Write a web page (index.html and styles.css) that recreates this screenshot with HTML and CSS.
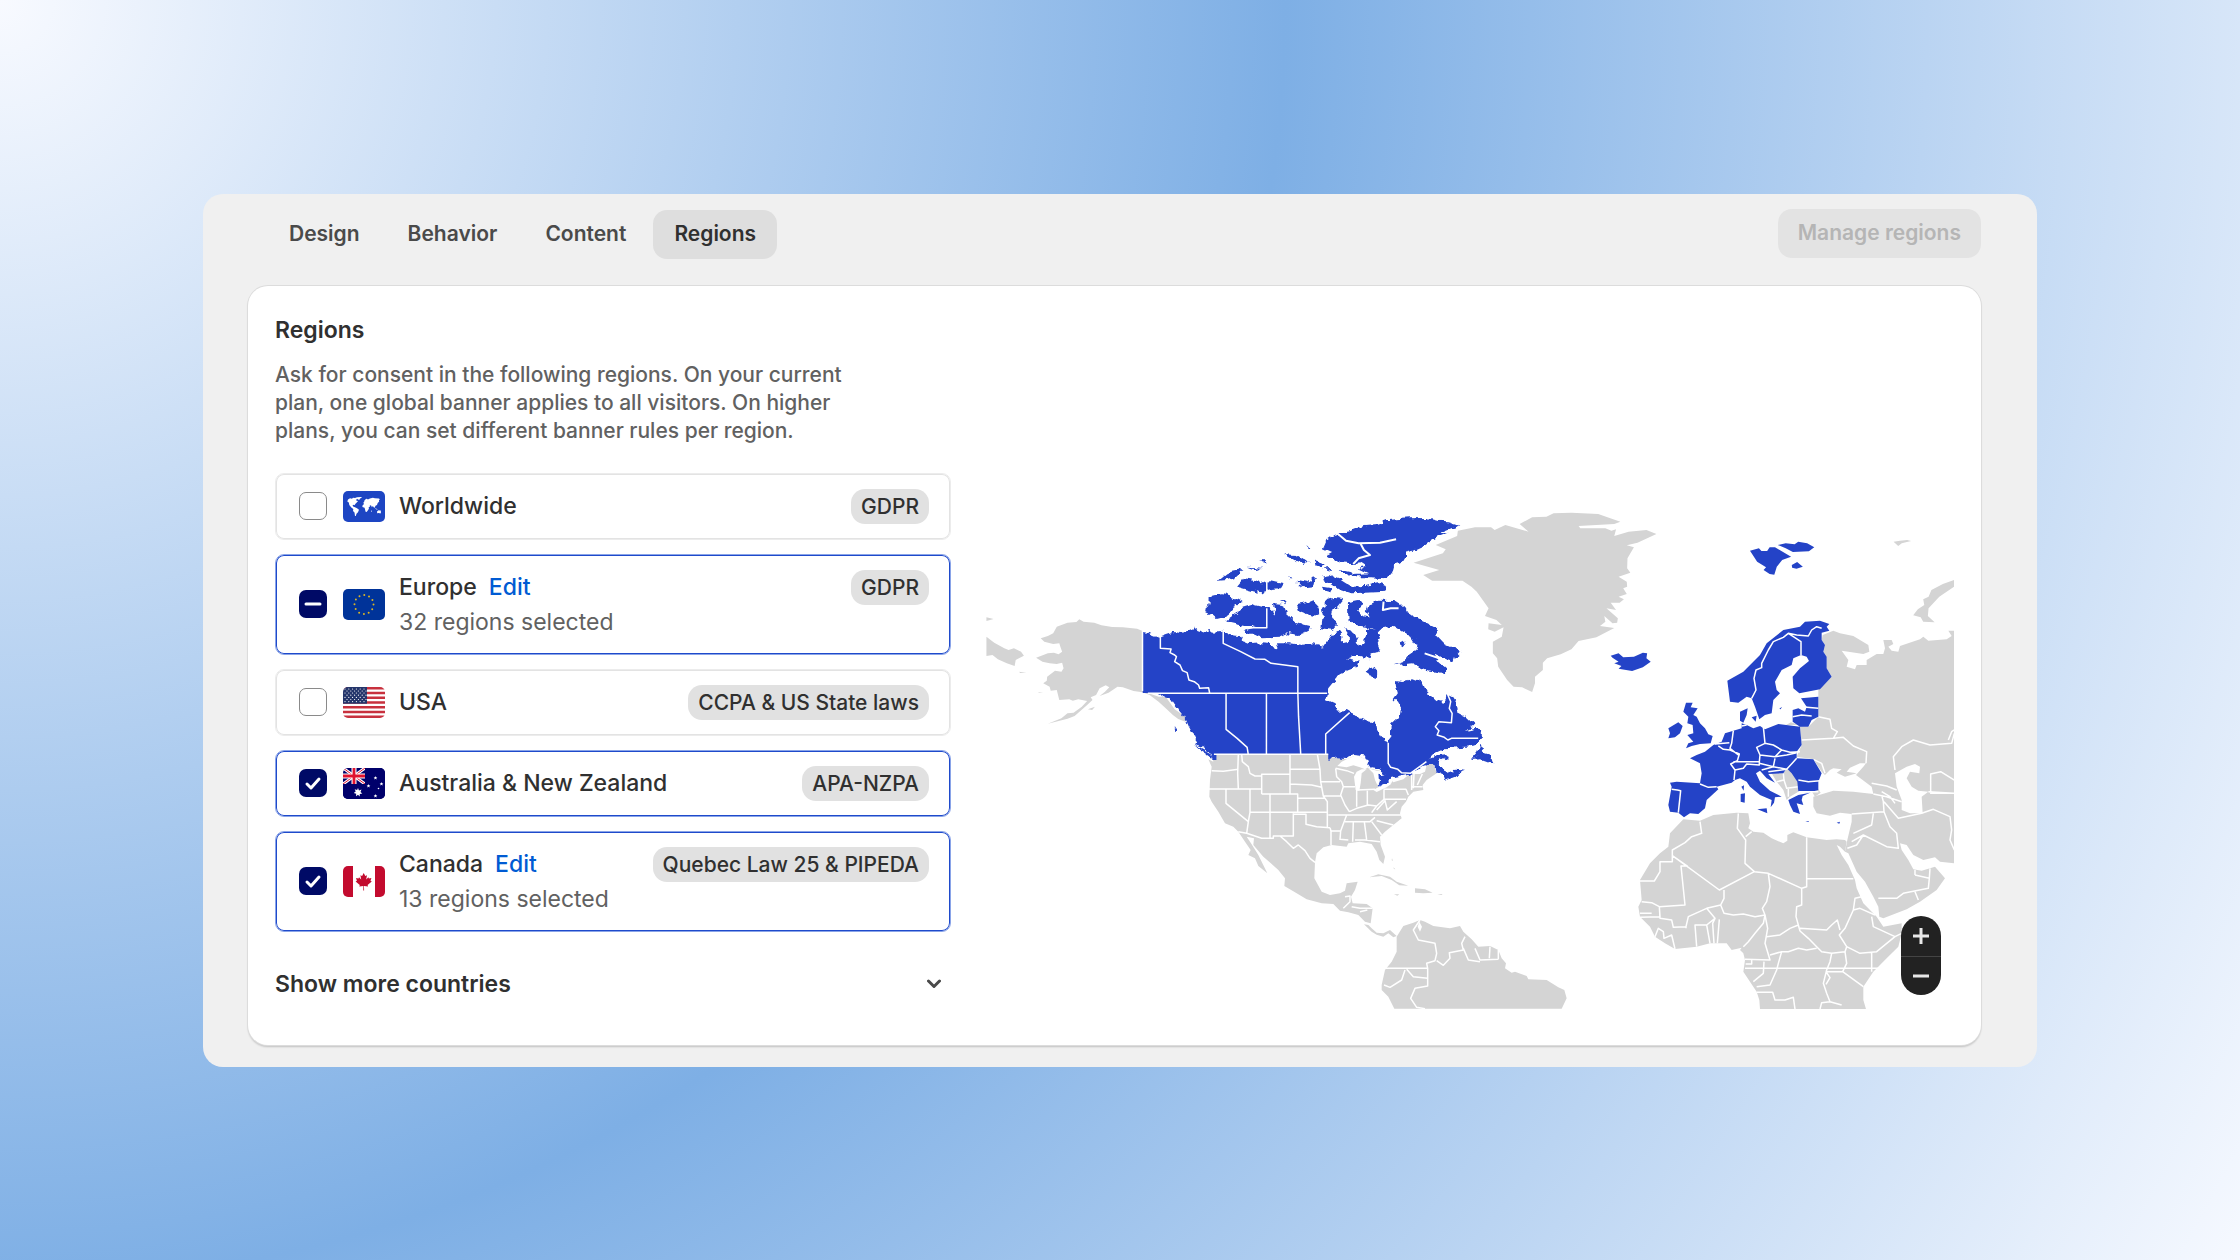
FILE: index.html
```html
<!DOCTYPE html>
<html lang="en">
<head>
    <meta charset="UTF-8">
    <title>Regions</title>
    <link rel="stylesheet" href="styles.css">
</head>
<body>
    <main class="panel">
        <header class="panel-header">
            <nav class="tabs">
                <button class="tab" type="button">Design</button>
                <button class="tab" type="button">Behavior</button>
                <button class="tab" type="button">Content</button>
                <button class="tab active" type="button">Regions</button>
            </nav>
            <button class="manage-btn" type="button" disabled>Manage regions</button>
        </header>

        <section class="card">
            <div class="settings">
                <h1>Regions</h1>
                <p class="description">Ask for consent in the following regions. On your current plan, one global banner applies to all visitors. On higher plans, you can set different banner rules per region.</p>

                <div class="region-list">
                    <div class="region">
                        <span class="checkbox">
                            <input type="checkbox" id="worldwide">
                        </span>
                        <svg class="flag" viewBox="0 0 42 31">
                            <rect width="42" height="31" fill="#1d45c3"/>
                            <path fill="#fff" d="M5 8.500l2-1.200 2 .4 1-1 2 .2 2-.7 4-.2 1 .8-2 .7-.5 1.300-1 0-1.500-1-1 1.500 2 1-1.500 1.500-1 1-1 1.500-1-.5-1 .8 1 1.200 1.500.5 2 1 2 1.500-1 2.500-1.500 1.500-.7 2.200-.8 0-.5-3.500-1.500-1.500.3-2-2-1.500-2-2.500-.5-2.500-1.500-1zM19.500 14.500l1.500-1.500-.7-1.200.9-1 .2-1.300 1.500-1.500 1-.2 1 .7 2-.9 3-.8 2 .5 4 .2 1 .8-1 1 .3 1.200-1.500 1.500-.7 2-1.500.8-.7 1.700-.7.3-1.300-1.900-.9 1.400-.8-1.900-1.300-.1.200 1.200-1.300.8.2 1.500-1.300 2-1 1.200-1-.2-1-4-2.200-.8zM34 20.500l1.500-1.200 1.200.3.500-.6.9 2-.6 1.400-1.700-.5-1.600.3zM32 16.700l1.500 1 1.500 1-2-.5zM28 20l.5-1 .2 1.500-.7.8z"/>
                        </svg>
                        <div class="region-info">
                            <div class="region-title"><label for="worldwide">Worldwide</label></div>
                        </div>
                        <span class="badge">GDPR</span>
                    </div>

                    <div class="region selected">
                        <span class="checkbox">
                            <input type="checkbox" id="europe" checked>
                            <svg viewBox="0 0 28 28"><path d="M7 14h14"/></svg>
                        </span>
                        <svg class="flag" viewBox="0 0 42 31">
                            <rect width="42" height="31" fill="#003399"/>
                            <circle cx="21" cy="15.500" r="9.500" fill="none" stroke="#d9b526" stroke-width="2" stroke-linecap="round" stroke-dasharray="0 4.974"/>
                        </svg>
                        <div class="region-info">
                            <div class="region-title"><label for="europe">Europe</label><a href="#">Edit</a></div>
                            <div class="region-count">32 regions selected</div>
                        </div>
                        <span class="badge">GDPR</span>
                    </div>

                    <div class="region">
                        <span class="checkbox">
                            <input type="checkbox" id="usa">
                        </span>
                        <svg class="flag" viewBox="0 0 42 31">
                            <rect width="42" height="31" fill="#fff"/>
                            <path stroke="#c8313e" stroke-width="2.400" d="M0 1.200h42M0 6h42M0 10.800h42M0 15.500h42M0 20.300h42M0 25h42M0 29.800h42"/>
                            <rect width="24" height="16.700" fill="#24356b"/>
                            <path stroke="#fff" stroke-width="1.200" stroke-linecap="round" stroke-dasharray="0 3.800" d="M2 2h21M4 4h19M2 6h21M4 8.200h19M2 10.400h21M4 12.500h19M2 14.600h21"/>
                        </svg>
                        <div class="region-info">
                            <div class="region-title"><label for="usa">USA</label></div>
                        </div>
                        <span class="badge">CCPA &amp; US State laws</span>
                    </div>

                    <div class="region selected">
                        <span class="checkbox">
                            <input type="checkbox" id="australia" checked>
                            <svg viewBox="0 0 28 28"><path d="M8 15l4 4 8-9"/></svg>
                        </span>
                        <svg class="flag" viewBox="0 0 42 31">
                            <rect width="42" height="31" fill="#00006b"/>
                            <path stroke="#fff" stroke-width="3" d="M0 0l22 16M22 0L0 16"/>
                            <path stroke="#e0122f" stroke-width="1" d="M0 0l22 16M22 0L0 16"/>
                            <path stroke="#fff" stroke-width="5" d="M11 0v16M0 8h22"/>
                            <path stroke="#e0122f" stroke-width="2.800" d="M11 0v16M0 8h22"/>
                            <path fill="#00006b" d="M22 0h20v31H0V16h22z"/>
                            <path fill="#fff" d="M15 20l1 2.500 2.500-1-1 2.500 1.800 1.500-2.500.5-.1 2.500-1.700-1.800-2 1.500.2-2.500-2.500-.7 2-1.500-1-2.300 2.400.8z"/>
                            <path fill="#fff" d="M32.500 8l.5 1.300 1.400 0-1.100.8.5 1.400-1.300-.8-1.300.8.4-1.400-1-.8 1.400 0zM25.500 16l.5 1.300 1.400 0-1.100.8.5 1.400-1.300-.8-1.300.8.4-1.400-1-.8 1.400 0zM38.500 14l.5 1.300 1.400 0-1.100.8.5 1.400-1.300-.8-1.300.8.4-1.400-1-.8 1.400 0zM32.500 26l.5 1.300 1.400 0-1.100.8.5 1.400-1.300-.8-1.300.8.4-1.400-1-.8 1.400 0z"/>
                            <circle cx="35.500" cy="20.500" r=".8" fill="#fff"/>
                        </svg>
                        <div class="region-info">
                            <div class="region-title"><label for="australia">Australia &amp; New Zealand</label></div>
                        </div>
                        <span class="badge">APA-NZPA</span>
                    </div>

                    <div class="region selected">
                        <span class="checkbox">
                            <input type="checkbox" id="canada" checked>
                            <svg viewBox="0 0 28 28"><path d="M8 15l4 4 8-9"/></svg>
                        </span>
                        <svg class="flag" viewBox="0 0 42 31">
                            <rect width="42" height="31" fill="#fff"/>
                            <path fill="#c30b2e" d="M0 0h10v31H0zM32 0h10v31H32z"/>
                            <path fill="#c30b2e" d="M20.700 7l1.600 3 1.700-.8-.8 4.300 2.200-2.300.5 1.300 2.500-.4-.9 2.600 1.300.7-4.200 3.500.5 1.600-4.100-.6.100 4.600h-.8l.1-4.600-4.100.6.500-1.600-4.200-3.500 1.300-.7-.9-2.600 2.500.4.500-1.300 2.200 2.300-.8-4.300 1.700.8z"/>
                        </svg>
                        <div class="region-info">
                            <div class="region-title"><label for="canada">Canada</label><a href="#">Edit</a></div>
                            <div class="region-count">13 regions selected</div>
                        </div>
                        <span class="badge">Quebec Law 25 &amp; PIPEDA</span>
                    </div>
                </div>

                <button class="show-more" type="button">
                    Show more countries
                    <svg viewBox="0 0 14 10"><path d="M1.500 2L7 7.500 12.500 2"/></svg>
                </button>
            </div>

            <div class="map">
                <svg class="map-canvas" viewBox="0 0 968 498">
                    <defs>
                        <!-- roughens the Canadian coastline -->
                        <filter id="coast" x="-2%" y="-2%" width="104%" height="104%" color-interpolation-filters="sRGB">
                            <feTurbulence type="fractalNoise" baseFrequency="0.05" numOctaves="2" seed="4" result="noise"/>
                            <feDisplacementMap in="SourceGraphic" in2="noise" scale="22" xChannelSelector="R" yChannelSelector="G"/>
                        </filter>
                        <!-- keeps the straight borders with Alaska and the lower states -->
                        <clipPath id="canada-border">
                            <path d="M455 0H1568V900H975V762H662V790H500V579H455z"/>
                        </clipPath>
                    </defs>

                    <!-- Alaska -->
                    <g transform="translate(-6 -11) scale(.35714 .33333)">
                        <path class="land" d="M455 393L440 386 400 382 370 381 340 376 320 368 290 365 278 358 270 366 245 368 215 380 205 400 190 408 170 415 180 425 205 432 222 430 225 440 230 455 220 463 207 458 190 460 170 468 157 473 175 485 195 490 215 492 230 488 234 505 228 515 210 512 188 530 187 542 177 550 195 560 198 572 215 570 222 600 250 598 260 602 275 598 300 603 285 620 262 638 245 640 228 655 190 671 245 656 265 648 300 615 315 600 310 592 325 585 335 565 352 556 362 562 350 575 335 588 360 578 385 560 400 562 430 573 455 577 475 585 500 605 520 625 540 645 555 657 575 665 575 650 545 628 520 590 500 590 455 573zM18 410L40 428 68 445 80 450 95 445 115 455 123 467 100 480 97 498 75 490 50 478 35 465 18 468zM18 352L38 357 18 363zM302 628l20-8-8 10zM110 515l20 4-18 0zM163 577l14 2-12 0z"/>
                    </g>

                    <!-- United States, Mexico, Central and South America -->
                    <g transform="translate(144 219) scale(.33333)">
                        <path class="land" d="M235 88L250 95 245 72 600 72 605 82 650 88 680 75 710 90 715 115 765 125 770 145 745 160 745 172 780 165 790 150 845 132 870 132 885 125 890 105 910 97 920 130 890 150 878 165 880 180 850 185 835 200 828 215 815 230 810 250 815 265 790 285 765 305 750 320 752 345 765 380 760 402 748 390 740 365 725 342 690 335 655 340 650 350 605 345 580 352 560 370 555 397 553 445 575 485 600 495 630 490 645 482 650 460 683 455 675 480 663 500 668 520 710 522 728 535 722 580 705 575 685 555 655 547 630 542 610 522 575 520 530 508 500 490 463 468 465 445 445 420 400 380 370 345 372 325 350 320 362 338 385 375 412 430 385 408 375 385 355 375 362 360 345 335 325 305 310 290 285 280 265 245 245 215 238 200 240 150 245 110z"/>
                        <path class="land" d="M702 583L715 585 725 595 740 608 760 610 780 600 800 618 790 622 775 610 760 620 740 614 725 605zM718 442L745 433 780 440 800 455 835 467 808 466 785 450 755 438zM855 475L885 478 908 488 880 490 855 488zM792 493l16 0-6 4zM922 492l16 0-4 3zM786 385l3 8-4-2zM790 412l6 6-4-1z"/>
                        <path class="land" d="M800 620L820 588 850 578 870 570 885 575 910 588 960 595 990 588 1000 605 1025 628 1045 650 1080 648 1105 660 1115 685 1128 700 1125 715 1145 728 1155 725 1190 738 1195 748 1250 750 1285 772 1303 780 1310 805 1295 836 793 836 775 800 755 780 755 765 765 720 785 695 800 665z"/>
                        <path class="water" d="M622 108L635 95 650 88 680 75 710 90 715 112 705 118 690 112 670 106 650 112zM680 125L695 118 710 118 695 130 692 160 688 182 677 180 672 140zM715 115L740 122 765 125 770 140 755 150 742 165 735 150 730 130zM730 180L745 172 785 160 770 172 740 186zM785 150L800 145 835 135 820 148 790 157zM868 575L876 590 870 605 863 590z"/>
                        <path class="border" d="M245 122L280 124 325 118M325 72L323 130 325 177M235 177H395M335 72L337 95 355 110 360 130 375 138 395 137M395 192V133H480M480 72V192M395 192H503V247M420 192V325M360 177V247H592M288 177V220L355 275 350 310M360 247L355 275M325 305L350 310 395 325H430V318H490V250M430 318H450L470 335 490 355 505 345 525 362 540 385 555 397M490 253H528V283L560 290 600 293M480 118H568M480 162L545 165 575 172M503 205H585M562 72L570 118 572 155H630M617 115L620 140 635 155 640 170H675M572 155L580 198 592 215V293M580 198H632M640 170L632 195 645 225 658 245M595 255H650L632 303H603L600 293M603 303V345M632 303L630 328 655 330M650 255H815M645 275H720L735 262M670 275L668 335M703 275L710 330M675 330H705L750 335M658 245L680 235 715 225 740 228 725 248M680 180V230M712 182V225M762 178V208H828M762 178H828L835 195M740 240L765 212 772 240 800 215M740 228L762 208M852 132L850 175M862 165L877 132M845 170H878M725 275L755 315M740 272L790 285M680 180L735 178M617 115L650 122 672 130M845 132V180M645 500L660 498 660 515 640 535M665 530L690 535 728 535M690 545L712 540M870 570L850 600 865 630 915 640 920 670 915 692 890 700 893 715V768L855 775 842 805 860 832 885 836M920 692L940 706 960 685 958 668 1000 660 995 640 1005 620M1000 655L1015 690 1050 695M1035 655L1050 690 1105 688M1080 650L1078 685M1105 660V688M765 715H893M830 718L850 740 893 745M825 720L815 750 780 772 762 765"/>
                    </g>

                    <!-- Canada -->
                    <g transform="translate(-6 -11) scale(.35714 .33333)">
                        <g clip-path="url(#canada-border)">
                        <g filter="url(#coast)">
                            <path class="land active" d="M435 390L480 402 500 410 520 402 540 395 545 405 560 392 580 390 600 380 610 388 632 395 645 390 655 398 681 395 700 405 730 408 740 425 755 432 790 430 815 432 825 448 835 430 870 430 900 435 930 430 960 440 970 425 990 400 1005 395 1015 410 1012 430 1030 425 1030 400 1020 385 1040 388 1055 415 1065 438 1085 400 1080 388 1110 392 1120 410 1110 430 1120 455 1095 460 1090 478 1060 465 1040 465 1028 475 1060 482 1055 500 1030 510 1010 520 990 545 975 565 970 600 990 610 998 632 1030 630 1060 650 1085 662 1108 668 1112 690 1125 715 1143 728 1155 712 1148 690 1152 672 1175 650 1178 630 1165 605 1158 598 1170 580 1165 560 1162 540 1185 543 1210 538 1240 550 1250 575 1275 600 1300 605 1310 585 1320 590 1335 615 1340 640 1360 650 1385 675 1360 690 1385 684 1405 690 1405 715 1390 735 1360 740 1300 745 1270 760 1255 778 1280 768 1308 766 1310 772 1285 785 1285 800 1310 820 1330 812 1358 815 1320 830 1300 840 1295 825 1275 815 1272 795 1250 790 1225 808 1200 825 1180 830 1150 838 1140 850 1115 860 1120 845 1118 825 1135 820 1120 808 1095 805 1085 790 1080 770 1050 765 1030 775 1000 772 975 780 655 780 648 762 620 742 600 735 605 715 595 700 585 680 575 655 560 635 545 615 530 590 515 585 480 590 435 590z"/>
                            <path class="land active" d="M1405 730L1395 755 1375 780 1400 778 1420 785 1438 793 1430 765 1410 758zM600 735L620 748 645 762 655 775 640 768 615 750zM545 682l8 10-6 2z"/>
                            <!-- arctic islands -->
                            <path class="land active" d="M640 288L680 283 710 292 735 305 710 320 700 338 685 350 660 357 650 348 628 337 640 315zM735 320L760 312 790 320 805 322 830 345 820 315 850 318 860 345 880 365 900 372 925 378 918 395 890 405 860 400 840 410 790 412 765 405 735 390 775 378 740 378 700 368 690 362 720 340zM990 232L1010 240 1040 260 1080 258 1110 250 1140 262 1135 275 1110 277 1040 280 1000 265 955 230 980 225zM665 242L690 220 735 210 715 230 690 240zM720 260L740 235 770 240 790 250 810 240 850 250 840 268 815 270 785 280 745 268zM852 163L890 165 918 185 910 195 880 180zM935 178L965 190 955 200 940 195zM780 183L800 180 802 188zM750 200L790 203 775 210zM890 240L915 245 930 232 940 240 935 262 910 265 890 255zM957 260L985 265 980 275 960 272zM915 140L928 142 920 147zM1010 210L1050 220 1030 230zM885 315L915 310 930 303 945 320 950 340 925 350 910 338 890 330zM968 300L990 293 1017 298 1000 320 990 330 985 350 1000 375 985 392 955 388 960 345 955 325 968 318zM840 303L858 306 855 316zM960 205L985 204 985 210zM862 232L875 240 868 242zM1090 500L1110 510 1108 535 1080 515z"/>
                            <path class="land active" d="M1015 97L1040 93 1080 75 1110 72 1140 60 1200 55 1250 54 1280 62 1310 64 1345 76 1320 85 1285 100 1312 98 1275 115 1240 140 1215 152 1190 158 1190 172 1180 190 1160 195 1155 215 1140 235 1090 232 1040 232 1045 222 1090 220 1060 205 1080 200 1065 190 1045 192 1000 190 990 178 970 165 985 157 960 145 970 120 990 105z"/>
                            <path class="land active" d="M1030 310L1060 303 1070 310 1062 335 1075 352 1088 355 1080 335 1085 310 1110 302 1160 303 1185 320 1190 330 1215 350 1245 365 1280 385 1278 405 1300 430 1345 453 1330 470 1325 485 1300 475 1270 460 1285 485 1305 505 1305 525 1280 515 1250 510 1230 500 1210 490 1165 495 1190 485 1200 470 1220 455 1225 435 1210 410 1185 395 1160 378 1130 385 1110 395 1080 380 1050 375 1032 360zM1170 430l15-8 8 8-10 12z"/>
                        </g>
                        </g>
                        <path class="channel" d="M1000 100L1025 122 1060 130 1120 128 1165 118M1065 130L1075 150 1092 165 1060 175 1045 192M1130 305L1128 330 1150 325 1172 325M1245 460L1300 480"/>
                        <path class="border" d="M505 410V445L535 447 532 458 545 465 550 470 545 485 560 495 567 512 580 518 585 540 600 545 612 555 615 565 640 563 643 579M470 580H972M681 395V430L730 455 770 477 798 478 815 490 890 500V579M689 580V688L720 715 748 742 751 762M802 580V762M890 580L892 650 898 762M1035 638L968 702V762M1143 728V790L1150 802 1170 808 1180 818 1205 820 1250 785M1310 585L1318 605 1314 625 1322 640 1320 668 1285 665 1275 680 1285 692 1280 705 1300 712 1310 720 1320 715H1395M803 325V383H740M455 393V573M655 763H975M803 240V280"/>
                    </g>

                    <!-- Greenland, Iceland, Svalbard, Novaya Zemlya -->
                    <g transform="translate(414 -21) scale(.35714 .33333)">
                        <path class="land" d="M38 218L120 190 128 178 100 165 160 138 162 122 210 112 255 112 265 120 295 105 360 125 335 102 370 82 410 80 430 70 480 68 555 72 617 95 600 102 500 108 505 115 575 115 592 122 605 118 600 138 640 125 690 120 718 132 665 158 635 166 655 172 637 205 636 235 645 248 612 260 635 275 636 290 625 295 635 312 612 320 627 328 615 338 590 338 605 360 578 355 610 385 608 398 595 400 572 378 575 395 560 408 600 414 550 442 500 453 480 478 450 493 412 505 400 518 400 540 378 560 378 580 370 606 342 592 318 590 300 570 275 530 272 505 260 490 260 455 285 440 290 412 265 425 247 418 248 400 285 405 270 390 238 378 248 355 215 305 200 290 175 272 90 272 65 255 110 240zM1382 155L1400 152 1420 150 1431 153 1405 160 1395 168zM1552 270L1520 282 1488 300 1480 320 1465 328 1468 345 1450 358 1437 376 1458 382 1465 395 1497 397 1478 378 1480 355 1510 320 1552 290z"/>
                        <path class="land active" d="M590 497L612 490 625 502 655 500 680 488 692 490 690 505 702 515 680 532 650 543 612 536 620 528 600 520 612 515 595 503zM980 182L1005 175 1012 183 1028 183 1035 172 1050 172 1095 200 1070 210 1055 230 1048 254 1035 252 1018 240 1025 232 1000 215zM1058 165L1080 160 1105 163 1115 155 1140 160 1160 172 1145 184 1100 186 1080 175zM1097 225L1112 216 1128 230 1110 236 1098 233z"/>
                    </g>

                    <!-- Africa -->
                    <g transform="translate(614 289) scale(.33333)">
                        <path class="land" d="M250 58L300 62 340 45 410 38 445 40 450 70 445 85 460 95 490 98 515 115 550 130 562 122 562 105 580 97 620 112 680 120 710 118 735 120 740 125 735 155 720 140 710 135 725 165 745 195 765 240 770 265 790 310 830 350 850 380 905 370 905 400 895 440 860 475 820 515 790 560 790 600 798 627 480 627 478 600 470 575 450 545 430 515 435 480 430 460 420 450 425 443 395 450 380 430 330 430 290 440 225 447 195 430 165 410 150 380 120 350 115 320 125 300 120 240 150 190 180 160 205 140 210 100z"/>
                        <path class="border" d="M300 65L305 100 275 110 255 128 217 150V185H180V215L163 243H118M217 167L358 270 463 215 435 190 437 120 412 85 415 40M217 167L262 198H243L255 315 178 320M372 270V295L362 315 320 325M455 95L437 110M620 112V260L605 265 505 220 463 215M505 220L510 260 500 305 487 325 495 345M605 265V315L590 320 588 350 595 375 600 393M622 236H760M125 305L155 308 178 320 180 350 120 352M178 320L180 355 215 360 220 382 258 380 265 350 320 325 345 355 320 375H285L290 440M258 380L258 385M320 375L330 430M345 355L338 370 342 430M358 358L352 430M362 315L372 340 400 345 430 342 465 350 495 345 490 370 465 400 445 425 430 440M495 345L503 385 495 430 510 480 435 478M500 410L540 405 570 385 595 375M510 465L545 455 565 455 595 445 620 450 650 445M600 393L625 415 650 440 665 455 695 460 735 455 740 440 718 405 735 385 760 330 780 325 825 345M600 385L680 390 695 375 712 360 720 390M760 330L765 295 785 290M735 385M740 440L780 460 830 455 885 410 905 400M885 410L820 380 815 350M435 505H835M545 455L535 490 530 510 510 555 470 560M695 460L690 485 680 510 670 550 680 580 690 605 725 615M735 455L740 490 728 515 790 560M815 458V515M680 515H728M470 577H518L525 600 555 600 580 592 585 627M660 627L665 608 690 605M165 410L175 385 190 395 192 415 215 405 225 447M120 340H155M492 485L490 520 460 545M455 480V492H437M680 518l10 15-12 20"/>
                    </g>

                    <!-- Russia, Turkey, Middle East -->
                    <g transform="translate(614 89) scale(.33333)">
                        <path class="land" d="M668 105L700 92 720 100 760 108 805 135 808 155 790 162 725 152 745 180 740 200 765 208 770 195 800 195 800 180 830 162 850 162 855 145 850 120 875 120 880 132 865 140 875 152 895 155 900 138 960 118 970 110 985 122 1040 118 1055 108 1045 92 1063 92V790L1020 785 1005 772 970 780 940 765 920 735 900 730 905 750 925 780 940 808 965 812 990 805 1005 800 1035 835 1010 870 960 905 920 928 850 955 838 950 835 920 820 890 795 845 770 815 745 760 735 755 742 720 755 665 755 642 720 638 690 647 650 640 640 620 640 590 700 572 760 575 820 582 815 560 768 525 790 500 798 490 780 490 750 503 740 515 770 520 735 530 710 518 725 508 700 505 690 510 675 525 665 515 640 478 590 470 605 435 600 378 625 380 655 350 655 270 695 230 680 205 680 170 670 155 675 135 665 120z"/>
                        <path class="land" d="M515 520L550 520 560 505 580 520 595 545 595 575 570 590 560 600 550 570 530 545zM636 575L655 568 662 578 645 590zM558 375l15-8 25 8z"/>
                        <path class="water" d="M885 520L920 500 945 492 960 500 958 520 930 515 920 535 935 560 955 572 985 575 965 590 968 640 930 640 905 630 905 600 890 560z"/>
                        <path class="border" d="M655 350L690 358 695 385 712 395 700 415 605 420M700 415L730 412 760 438 800 455 798 490M885 510L880 470 905 440 940 420 990 435 1055 430 1063 400M1063 580H992V522L1022 515 1063 540M985 575L1063 580M815 550L860 558 890 570M820 582L860 590 905 605M845 585L850 605 852 635 755 642M852 605L895 655 965 640M852 635L870 680 890 700 895 745 860 740 790 705 755 725M820 640L815 675 760 700M965 640L1000 628 1050 650 1055 690 1050 720 1063 750M790 705L770 735 742 745M835 895L890 895 910 880 985 865 988 835 945 825M945 875L955 900M945 825V810M988 835L990 805M640 478L665 490 675 520M550 520L552 540 530 545M552 540L560 565 595 560M565 590V565M845 575L870 590 885 610M1045 420l10-25 8-5"/>
                    </g>

                    <!-- Europe -->
                    <g transform="translate(614 89) scale(.33333)">
                        <path class="land active" d="M382 242L430 215 480 165 500 130 550 90 600 80 615 65 660 62 688 72 680 80 688 92 665 98 665 120 675 135 670 155 680 170 680 205 695 230 660 268 598 280 580 265 578 230 600 205 627 183 620 170 603 165 580 175 575 195 545 210 525 245 530 270 540 280 520 300 515 340 495 345 478 358 465 320 455 295 440 290 415 308 390 305z"/>
                        <path class="land active" d="M258 308L278 308 272 322 293 325 280 345 290 350 300 370 315 385 325 403 338 408 332 430 300 432 275 438 258 445 265 430 280 425 262 405 280 400 278 375 262 370 265 350 250 335zM205 415L210 400 205 385 235 367 248 378 240 400 225 412zM420 335L443 325 440 345 430 368 420 362zM455 352l15-5-3 18zM538 326l8-6-4 8z"/>
                        <path class="land active" d="M340 435L365 425 375 400 400 392 425 385 425 370 440 375 460 385 480 378 495 388 535 372 600 380 605 435 590 455 590 475 640 478 665 520 655 545 655 570 630 577 595 575 592 545 575 520 560 505 550 520 505 522 525 548 500 535 480 512 468 520 480 545 510 572 545 590 525 592 522 608 512 622 515 600 480 585 450 560 440 545 420 535 405 540 395 548 350 560 355 568 320 600 315 625 295 642 270 640 252 652 235 638 210 635 205 615 215 560 210 548 230 545 300 550 305 520 300 490 270 475 290 465 315 455zM603 295L655 290 655 350 635 360 625 380 600 380 578 365 578 330 595 325 615 335 620 320zM565 600L595 585 630 578 608 588 605 600 610 615 590 610 595 625 600 642 580 635 570 615zM472 628L500 625 502 640zM422 582L435 580 434 608 422 605zM424 560L432 556 431 572zM616 663h10v3zM710 668l10-3-2 6z"/>
                        <path class="border" d="M455 295L468 270 462 235 468 210 485 203 485 190 505 150 520 125 550 112 565 100 590 105 625 108 635 90 650 80 665 85M565 100L603 125V165M215 568L232 570 242 572 235 638M300 552L325 562 350 560M400 392L395 430 390 445 415 465M345 432L388 428M355 438L370 448 390 450 418 462 412 482 392 492 405 510 402 540M425 378L440 375M490 380L495 430 470 442 480 465 478 485 440 485 400 485M495 430L520 435 545 450 570 457 600 455M480 465L525 470 545 450M525 470L560 465 590 458M478 485L478 495 440 492 430 505 405 510M478 490L520 500 525 475M520 500L560 508 590 475M560 508L505 515M595 540L625 545 660 542M603 320L655 325M578 350L605 345 635 348M595 575L655 575M520 500L485 510"/>
                    </g>
                </svg>

                <div class="zoom">
                    <button type="button" aria-label="Zoom in"><svg viewBox="0 0 18 18"><path d="M9 1v16M1 9h16"/></svg></button>
                    <button type="button" aria-label="Zoom out"><svg viewBox="0 0 18 18"><path d="M1 9h16"/></svg></button>
                </div>
            </div>
        </section>
    </main>
</body>
</html>
```
FILE: styles.css
```css
* {
    box-sizing: border-box;
}
body {
    display: flex;
    align-items: center;
    min-height: 100vh;
    margin: 0;
    padding: 40px 203px;
    font-family: Inter, "Liberation Sans", sans-serif;
    font-size: 21px;
    font-weight: 500;
    line-height: 28px;
    color: #303030;
    background: radial-gradient(circle farthest-corner at 0 0, #f8faff 0%, #7eafe5 50%, #f6f9ff 100%);
}
button {
    font: inherit;
    color: inherit;
    border: none;
    background: none;
    padding: 0;
    cursor: pointer;
}
.panel {
    flex: 1;
    padding: 15px 56px 22px 45px;
    border-radius: 20px;
    background-color: #f0f0f0;
}

/* header */
.panel-header {
    display: flex;
    justify-content: space-between;
    margin-bottom: 27px;
    font-weight: 600;
}
.tabs {
    display: flex;
    gap: 6px;
    margin: 1px 0 0 20px;
}
.tab {
    height: 49px;
    padding: 0 21px;
    border-radius: 14px;
    color: #4a4a4a;
}
.tab.active {
    background-color: #dedede;
    color: #303030;
}
.manage-btn {
    height: 49px;
    padding: 0 20px;
    border-radius: 14px;
    background-color: #e3e3e3;
    color: #b5b5b5;
    cursor: default;
}

/* card */
.card {
    display: grid;
    grid-template-columns: 676px 1fr;
    gap: 35px;
    align-items: end;
    padding: 30px 27px 36px;
    border-radius: 20px;
    background-color: #fff;
    box-shadow: 0 0 0 1px #dcdcdc, 0 2px 2px rgba(0, 0, 0, 0.2);
}
h1 {
    margin: 0 0 17px;
    font-size: 23px;
    font-weight: 600;
}
.description {
    max-width: 600px;
    margin: 0 0 28px;
    color: #616161;
}
.region-list {
    display: flex;
    flex-direction: column;
    gap: 14px;
}
.region {
    display: flex;
    align-items: center;
    padding: 15px 21px 15px 23px;
    border: 1px solid #ececec;
    border-radius: 9px;
    box-shadow: inset 0 0 0 1px #e3e3e3;
}
.region.selected {
    border-color: #8aa4e8;
    box-shadow: inset 0 0 0 1px #1f4acb;
}
.checkbox {
    display: grid;
    width: 28px;
    height: 28px;
    margin-right: 16px;
}
.checkbox input {
    grid-area: 1 / 1;
    appearance: none;
    margin: 0;
    border: 1px solid #8a8a8a;
    border-radius: 7px;
}
.checkbox input:checked {
    border: none;
    background-color: #000a66;
}
.checkbox svg {
    grid-area: 1 / 1;
    fill: none;
    stroke: #fff;
    stroke-width: 3;
    stroke-linecap: round;
    stroke-linejoin: round;
    pointer-events: none;
}
.flag {
    width: 42px;
    height: 31px;
    margin-right: 14px;
    border-radius: 5px;
}
.region-info {
    flex: 1;
    font-size: 23px;
    line-height: 35px;
}
.region-title {
    display: flex;
    gap: 12px;
}
.region-title a {
    color: #005bd3;
    text-decoration: none;
}
.region-count {
    line-height: 34px;
    font-weight: 400;
    color: #616161;
}
.badge {
    align-self: flex-start;
    padding: 0 10px;
    border-radius: 14px;
    background-color: #e1e1e1;
    line-height: 35px;
}
.show-more {
    display: flex;
    justify-content: space-between;
    align-items: center;
    width: 100%;
    margin-top: 27px;
    padding: 11px 10px 11px 0;
    font-size: 23px;
    font-weight: 600;
}
.show-more svg {
    width: 14px;
    height: 10px;
    fill: none;
    stroke: #4a4a4a;
    stroke-width: 3;
    stroke-linecap: round;
    stroke-linejoin: round;
}

/* map */
.map {
    position: relative;
}
.map-canvas {
    display: block;
    width: 100%;
}
.land {
    fill: #d4d4d4;
}
.land.active {
    fill: #2443c7;
}
.water {
    fill: #fff;
}
.border,
.channel {
    fill: none;
    stroke: #fff;
    stroke-width: 1.5px;
    stroke-linejoin: round;
    vector-effect: non-scaling-stroke;
}
.channel {
    stroke-width: 2px;
}
.zoom {
    position: absolute;
    right: 13px;
    bottom: 14px;
    width: 40px;
    border-radius: 20px;
    overflow: hidden;
    background-color: #222;
}
.zoom button {
    display: grid;
    place-items: center;
    width: 40px;
    height: 40px;
}
.zoom button + button {
    height: 39px;
    border-top: 1px solid #444;
}
.zoom svg {
    width: 18px;
    height: 18px;
    stroke: #e8e8e8;
    stroke-width: 3;
}
```
